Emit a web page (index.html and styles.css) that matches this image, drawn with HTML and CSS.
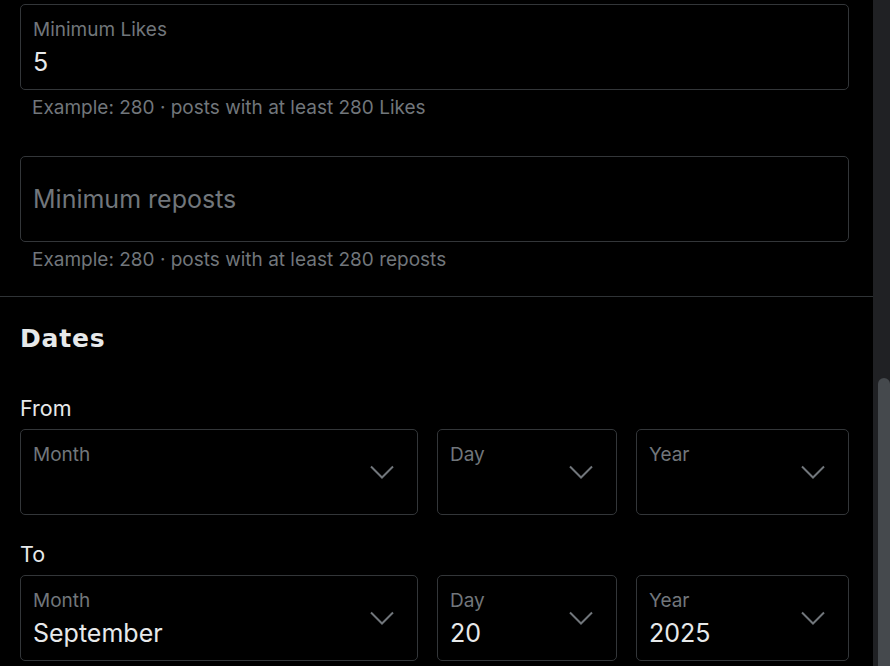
FILE: index.html
```html
<!DOCTYPE html>
<html lang="en">
<head>
<meta charset="utf-8">
<title>Advanced search</title>
<link rel="stylesheet" href="styles.css">
</head>
<body>
<div class="page">
  <main class="main">
    <section class="engagement">
      <div class="field">
        <span class="field-label">Minimum Likes</span>
        <span class="field-value">5</span>
      </div>
      <p class="helper">Example: 280 · posts with at least 280 Likes</p>
      <div class="field field-empty">
        <span class="placeholder">Minimum reposts</span>
      </div>
      <p class="helper">Example: 280 · posts with at least 280 reposts</p>
    </section>
    <section class="dates">
      <h2 class="heading">Dates</h2>
      <div class="range-label range-from">From</div>
      <div class="date-row">
        <div class="select">
          <div class="select-text"><span class="field-label">Month</span></div>
          <svg class="chevron" width="24" height="14" viewBox="0 0 24 14"><polyline points="1,1.5 12,12.5 23,1.5"/></svg>
        </div>
        <div class="select">
          <div class="select-text"><span class="field-label">Day</span></div>
          <svg class="chevron" width="24" height="14" viewBox="0 0 24 14"><polyline points="1,1.5 12,12.5 23,1.5"/></svg>
        </div>
        <div class="select">
          <div class="select-text"><span class="field-label">Year</span></div>
          <svg class="chevron" width="24" height="14" viewBox="0 0 24 14"><polyline points="1,1.5 12,12.5 23,1.5"/></svg>
        </div>
      </div>
      <div class="range-label range-to">To</div>
      <div class="date-row">
        <div class="select">
          <div class="select-text"><span class="field-label">Month</span><span class="field-value">September</span></div>
          <svg class="chevron" width="24" height="14" viewBox="0 0 24 14"><polyline points="1,1.5 12,12.5 23,1.5"/></svg>
        </div>
        <div class="select">
          <div class="select-text"><span class="field-label">Day</span><span class="field-value">20</span></div>
          <svg class="chevron" width="24" height="14" viewBox="0 0 24 14"><polyline points="1,1.5 12,12.5 23,1.5"/></svg>
        </div>
        <div class="select">
          <div class="select-text"><span class="field-label">Year</span><span class="field-value">2025</span></div>
          <svg class="chevron" width="24" height="14" viewBox="0 0 24 14"><polyline points="1,1.5 12,12.5 23,1.5"/></svg>
        </div>
      </div>
    </section>
  </main>
  <div class="scrollbar"><div class="thumb"></div></div>
</div>
</body>
</html>
```
FILE: styles.css
```css
html, body {
  margin: 0;
  padding: 0;
  background: #000;
}
body {
  font-family: "Inter", "Liberation Sans", sans-serif;
  color: #e7e9ea;
}
.page {
  display: flex;
  height: 666px;
  overflow: hidden;
}
.main {
  width: 873px;
  flex: none;
}
.scrollbar {
  width: 17px;
  flex: none;
  background: #202124;
  display: flex;
  flex-direction: column;
}
.thumb {
  margin-top: 378px;
  margin-left: 5px;
  flex: 1;
  background: #45494d;
  border-radius: 6px 6px 0 0;
}
.engagement {
  padding: 4px 24px 0 20px;
}
.field {
  box-sizing: border-box;
  height: 86px;
  border: 1px solid #333639;
  border-radius: 5px;
  padding: 13px 12px 0;
  display: flex;
  flex-direction: column;
}
.field-empty {
  justify-content: center;
  padding-top: 0;
}
.field-label {
  display: block;
  font-size: 19px;
  line-height: 24px;
  color: #71767b;
}
.field-value {
  display: block;
  margin-top: 5px;
  font-size: 25px;
  line-height: 30px;
  color: #e7e9ea;
}
.placeholder {
  font-size: 25px;
  line-height: 30px;
  color: #71767b;
}
.helper {
  margin: 6px 0 36px;
  padding-left: 12px;
  font-size: 19px;
  line-height: 24px;
  color: #71767b;
}
.helper:last-child {
  margin-bottom: 24px;
}
.dates {
  border-top: 1px solid #2f3336;
  padding: 0 24px 0 20px;
}
.heading {
  margin: 27px 0 0;
  font-family: "DejaVu Sans", "Inter", sans-serif;
  font-weight: 700;
  font-size: 25px;
  line-height: 30px;
  letter-spacing: 0.8px;
  color: #e7e9ea;
}
.range-label {
  font-size: 21.5px;
  line-height: 26px;
  color: #e7e9ea;
  margin-bottom: 8px;
}
.range-from {
  margin-top: 41px;
}
.range-to {
  margin-top: 26px;
}
.date-row {
  display: grid;
  grid-template-columns: 398px 180px 1fr;
  column-gap: 19px;
}
.select {
  box-sizing: border-box;
  height: 86px;
  border: 1px solid #333639;
  border-radius: 5px;
  padding: 13px 23px 0 12px;
  display: flex;
  align-items: flex-start;
}
.select-text {
  flex: 1;
  display: flex;
  flex-direction: column;
}
.chevron {
  align-self: center;
  margin-top: -13px;
  fill: none;
  stroke: #71767b;
  stroke-width: 2;
}
```
